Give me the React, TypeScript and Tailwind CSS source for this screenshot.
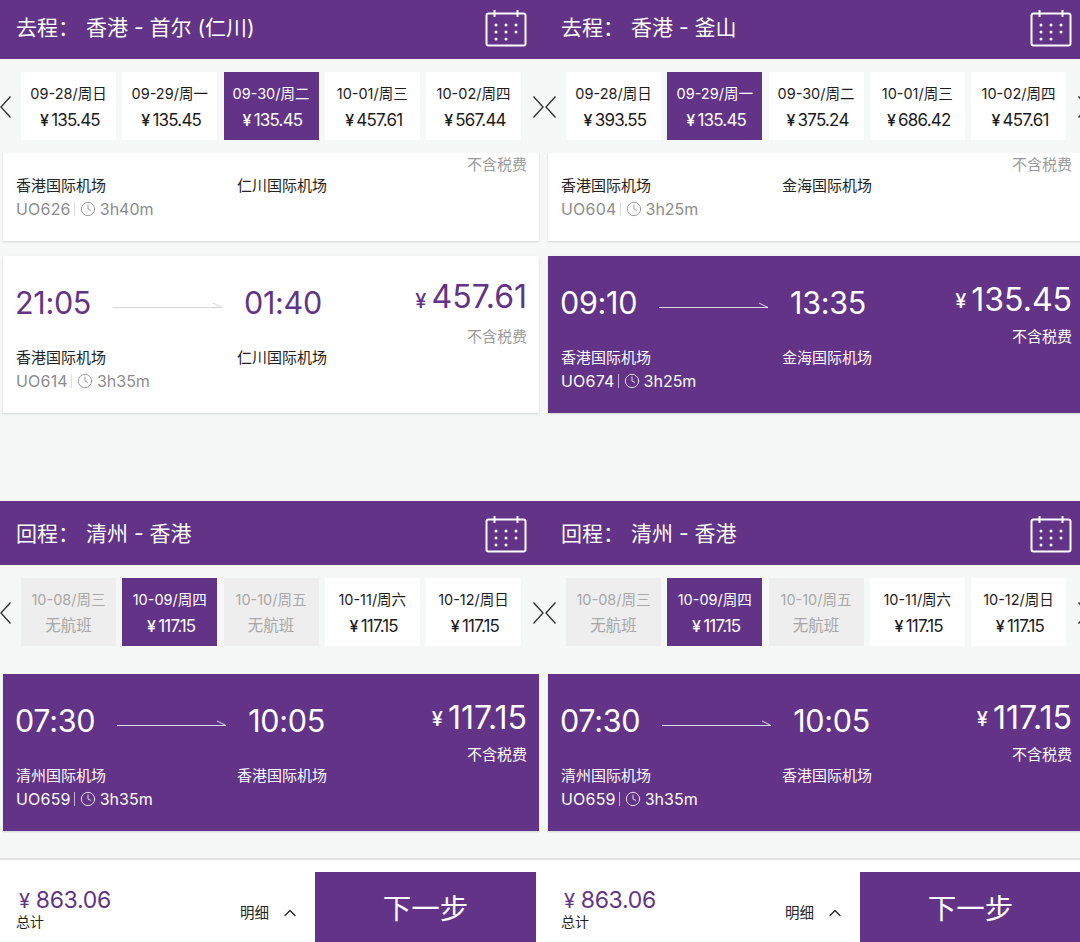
import { ChevronUp, Clock } from 'lucide-react';

interface Day {
    date: string;
    price?: string;
    active?: boolean;
}

interface Flight {
    dep?: string;
    arr?: string;
    price?: string;
    from: string;
    to: string;
    code: string;
    duration: string;
    selected?: boolean;
}

interface Leg {
    title: string;
    route: string;
    days: Day[];
}

function CalendarIcon() {
    return (
        <svg width="42" height="37" viewBox="0 0 42 37" fill="none" stroke="white" strokeWidth="2" className="-mt-[3px]">
            <rect x="1.5" y="3.5" width="39" height="32" rx="2" />
            <path d="M9.5 0V7M32.5 0V7" />
            <g fill="white" stroke="none">
                <circle cx="11" cy="15" r="1.5" />
                <circle cx="21" cy="15" r="1.5" />
                <circle cx="31" cy="15" r="1.5" />
                <circle cx="11" cy="22" r="1.5" />
                <circle cx="21" cy="22" r="1.5" />
                <circle cx="31" cy="22" r="1.5" />
                <circle cx="11" cy="29" r="1.5" />
                <circle cx="21" cy="29" r="1.5" />
            </g>
        </svg>
    );
}

function Chevron({ path }: { path: string }) {
    return (
        <svg width="12" height="24" viewBox="0 0 12 24" fill="none" stroke="#333333" strokeWidth="1.4" className="mt-[2px]">
            <path d={path} />
        </svg>
    );
}

function DayChip({ day }: { day: Day }) {
    const tone = day.active
        ? 'bg-[#623387] text-white'
        : day.price
          ? 'bg-white text-[#1c1c1c]'
          : 'bg-[#eeeeee] text-[#a8a8a8]';

    return (
        <div className={`flex h-[68px] w-[95px] shrink-0 flex-col items-center justify-center gap-[5px] pt-[3px] ${tone}`}>
            <span className="text-[14.5px] leading-[20px] whitespace-nowrap">{day.date}</span>
            {day.price ? (
                <span className="flex items-baseline pl-[3px] text-[17px] leading-[22px] tracking-[-0.8px]">
                    <span className="mr-[3px] text-[16px] font-medium">¥</span>
                    {day.price}
                </span>
            ) : (
                <span className="text-[15.5px] leading-[22px]">无航班</span>
            )}
        </div>
    );
}

function DateStrip({ days, className }: { days: Day[]; className: string }) {
    return (
        <div className={`flex items-center ${className}`}>
            <div className="w-[21px] shrink-0">
                <Chevron path="M10.5 1.5 1 12l9.5 10.5" />
            </div>
            <div className="flex shrink-0 gap-[6.25px]">
                {days.map((day) => (
                    <DayChip key={day.date} day={day} />
                ))}
            </div>
            <div className="ml-[11px] shrink-0">
                <Chevron path="M1.5 1.5 11 12l-9.5 10.5" />
            </div>
        </div>
    );
}

function FlightCard({ flight }: { flight: Flight }) {
    const selected = flight.selected;
    const accent = selected ? 'text-white' : 'text-[#623387]';
    const strong = selected ? 'text-white' : 'text-[#222222]';
    const muted = selected ? 'text-white' : 'text-[#8c8c8c]';
    const tax = selected ? 'text-white' : 'text-[#9a9a9a]';

    return (
        <div
            className={`flex h-[157px] w-[536px] shrink-0 justify-between pr-[12px] pl-[13px] shadow-[0_1px_2px_rgba(0,0,0,0.14)] ${
                selected ? 'bg-[#623387]' : 'bg-white'
            }`}
        >
            <div className="flex-1">
                <div className={`flex h-[92px] items-center pt-[3px] text-[30.5px] tracking-[-0.3px] ${accent}`}>
                    {flight.dep && (
                        <>
                            <span className="-ml-[1px] leading-none">{flight.dep}</span>
                            <svg width="110" height="8" viewBox="0 0 110 8" fill="none" className="mt-[2px] mr-[21px] ml-[22px]">
                                <path
                                    d="M0 6.5H109L100 2"
                                    stroke={selected ? '#ffffff' : '#d6d6d6'}
                                    strokeWidth="1"
                                    opacity={selected ? 0.8 : 1}
                                />
                            </svg>
                            <span className="leading-none">{flight.arr}</span>
                        </>
                    )}
                </div>
                <div className={`flex text-[15px] leading-[20px] ${strong}`}>
                    <span className="w-[221px]">{flight.from}</span>
                    <span>{flight.to}</span>
                </div>
                <div className={`mt-[3px] flex items-center text-[16px] leading-[20px] ${muted}`}>
                    <span className="tracking-[0.2px]">{flight.code}</span>
                    <span className={`mx-[3px] h-[14px] w-px ${selected ? 'bg-white/60' : 'bg-[#dddddd]'}`} />
                    <Clock size={16} strokeWidth={1.25} className="mr-[4px] ml-[2px]" />
                    <span>{flight.duration}</span>
                </div>
            </div>
            <div className="flex flex-col items-end">
                <div className={`flex h-[70px] items-end text-[32px] leading-none ${accent}`}>
                    {flight.price && (
                        <>
                            <span className="mr-[5px] mb-[15px] text-[20px] font-medium">¥</span>
                            <span className={selected ? 'mb-[10px]' : 'mb-[13px]'}>{flight.price}</span>
                        </>
                    )}
                </div>
                <span className={`text-[15px] leading-[22px] ${tax}`}>不含税费</span>
            </div>
        </div>
    );
}

function Header({ leg, className }: { leg: Leg; className: string }) {
    return (
        <div className={`flex items-center justify-between bg-[#623387] pr-[18px] pl-[16px] text-white ${className}`}>
            <div className="-mt-[4px] flex text-[21px]">
                <span className="w-[70px]">{leg.title}</span>
                <span>{leg.route}</span>
            </div>
            <CalendarIcon />
        </div>
    );
}

function Footer() {
    return (
        <div className="flex h-[83px] border-t-2 border-[#e2e2e2] bg-white pt-[12px]">
            <div className="flex w-[240px] flex-col pt-[14px] pl-[16px]">
                <span className="flex items-baseline text-[23px] leading-[28px] tracking-[-0.3px] text-[#623387]">
                    <span className="mr-[6px] ml-[3px] text-[20px]">¥</span>863.06
                </span>
                <span className="-mt-[1px] text-[14px] leading-[16px] text-[#222222]">总计</span>
            </div>
            <div className="flex w-[75px] items-center pt-[12px] text-[14.5px] text-[#222222]">
                <span>明细</span>
                <ChevronUp size={20} strokeWidth={1.5} className="ml-[11px]" />
            </div>
            <div className="flex h-[70px] w-[221px] items-center justify-center bg-[#623387] pt-[4px] text-[28.5px] text-white">
                下一步
            </div>
        </div>
    );
}

function Column({ outbound, flights }: { outbound: Leg; flights: Flight[] }) {
    const inbound: Leg = {
        title: '回程：',
        route: '清州 - 香港',
        days: [
            { date: '10-08/周三' },
            { date: '10-09/周四', price: '117.15', active: true },
            { date: '10-10/周五' },
            { date: '10-11/周六', price: '117.15' },
            { date: '10-12/周日', price: '117.15' },
        ],
    };

    return (
        <div className="flex h-[942px] w-[545px] shrink-0 flex-col">
            <Header leg={outbound} className="h-[59px] pt-[1px]" />
            <DateStrip days={outbound.days} className="h-[94px]" />

            {/* Scrolled card: only its lower part is in view */}
            <div className="flex h-[91px] flex-col justify-end overflow-hidden pb-[3px] pl-[3px]">
                <FlightCard flight={flights[0]} />
            </div>
            <div className="mt-[12px] pl-[3px]">
                <FlightCard flight={flights[1]} />
            </div>

            <div className="mt-[88px]">
                <Header leg={inbound} className="h-[64px] pt-[5px]" />
            </div>
            <DateStrip days={inbound.days} className="h-[94px]" />
            <div className="mt-[15px] pl-[3px]">
                <FlightCard
                    flight={{
                        dep: '07:30',
                        arr: '10:05',
                        price: '117.15',
                        from: '清州国际机场',
                        to: '香港国际机场',
                        code: 'UO659',
                        duration: '3h35m',
                        selected: true,
                    }}
                />
            </div>
            <div className="mt-[27px]">
                <Footer />
            </div>
        </div>
    );
}

export default function App() {
    return (
        <div className="flex h-[942px] w-[1080px] overflow-hidden bg-[#f6f8f8] font-['Inter','Noto_Sans_CJK_SC',sans-serif]">
            <Column
                outbound={{
                    title: '去程：',
                    route: '香港 - 首尔 (仁川)',
                    days: [
                        { date: '09-28/周日', price: '135.45' },
                        { date: '09-29/周一', price: '135.45' },
                        { date: '09-30/周二', price: '135.45', active: true },
                        { date: '10-01/周三', price: '457.61' },
                        { date: '10-02/周四', price: '567.44' },
                    ],
                }}
                flights={[
                    { from: '香港国际机场', to: '仁川国际机场', code: 'UO626', duration: '3h40m' },
                    {
                        dep: '21:05',
                        arr: '01:40',
                        price: '457.61',
                        from: '香港国际机场',
                        to: '仁川国际机场',
                        code: 'UO614',
                        duration: '3h35m',
                    },
                ]}
            />
            <Column
                outbound={{
                    title: '去程：',
                    route: '香港 - 釜山',
                    days: [
                        { date: '09-28/周日', price: '393.55' },
                        { date: '09-29/周一', price: '135.45', active: true },
                        { date: '09-30/周二', price: '375.24' },
                        { date: '10-01/周三', price: '686.42' },
                        { date: '10-02/周四', price: '457.61' },
                    ],
                }}
                flights={[
                    { from: '香港国际机场', to: '金海国际机场', code: 'UO604', duration: '3h25m' },
                    {
                        dep: '09:10',
                        arr: '13:35',
                        price: '135.45',
                        from: '香港国际机场',
                        to: '金海国际机场',
                        code: 'UO674',
                        duration: '3h25m',
                        selected: true,
                    },
                ]}
            />
        </div>
    );
}
